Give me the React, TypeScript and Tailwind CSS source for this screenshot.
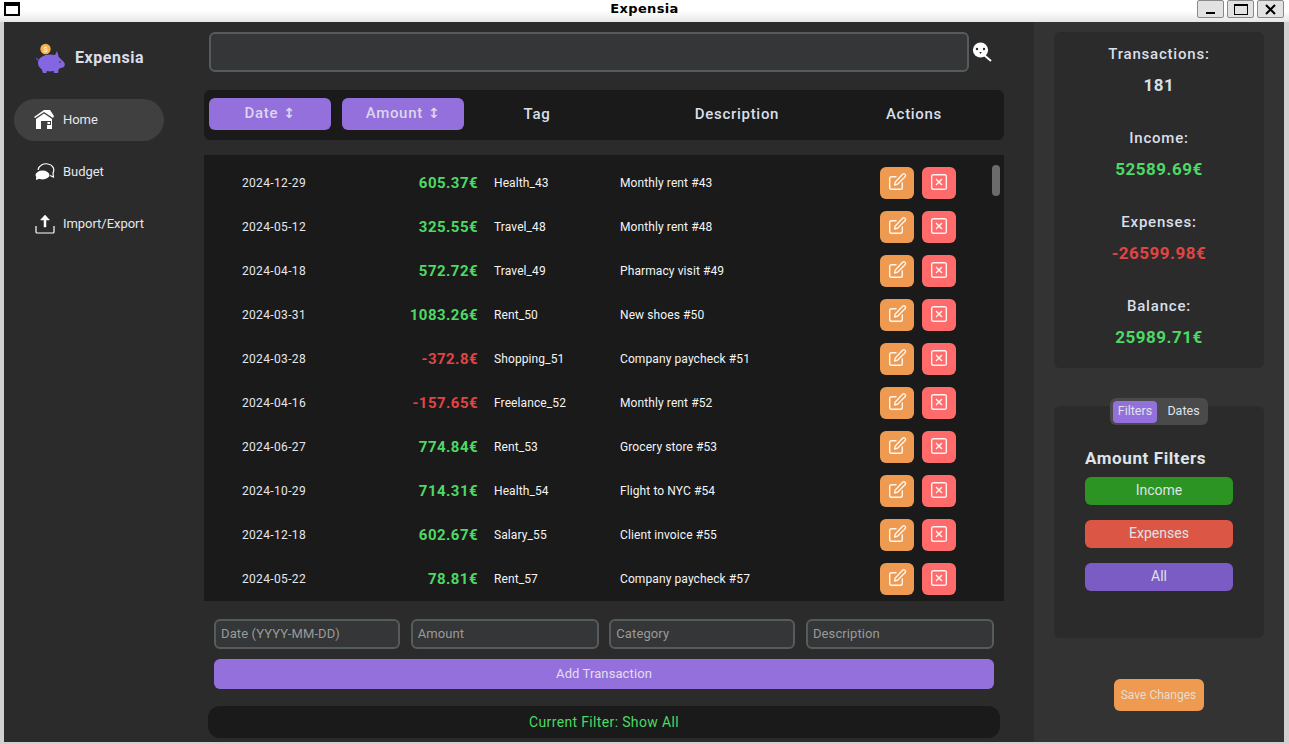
import React from "react";

const rows: [string, string, boolean, string, string][] = [
  ["2024-12-29", "605.37€", true, "Health_43", "Monthly rent #43"],
  ["2024-05-12", "325.55€", true, "Travel_48", "Monthly rent #48"],
  ["2024-04-18", "572.72€", true, "Travel_49", "Pharmacy visit #49"],
  ["2024-03-31", "1083.26€", true, "Rent_50", "New shoes #50"],
  ["2024-03-28", "-372.8€", false, "Shopping_51", "Company paycheck #51"],
  ["2024-04-16", "-157.65€", false, "Freelance_52", "Monthly rent #52"],
  ["2024-06-27", "774.84€", true, "Rent_53", "Grocery store #53"],
  ["2024-10-29", "714.31€", true, "Health_54", "Flight to NYC #54"],
  ["2024-12-18", "602.67€", true, "Salary_55", "Client invoice #55"],
  ["2024-05-22", "78.81€", true, "Rent_57", "Company paycheck #57"],
];

function Piggy() {
  return (
    <svg width="30" height="32" viewBox="0 0 30 32">
      <circle cx="9.5" cy="6" r="5.2" fill="#f6b04c" />
      <text x="9.5" y="9" fontSize="8" fill="#fff" textAnchor="middle" fontFamily="Roboto">$</text>
      <ellipse cx="14" cy="20" rx="12" ry="8.5" fill="#8467e0" />
      <path d="M18 14 L21 8 L23 15 L27 18 L29 21 L28 24 L22 26 Z" fill="#8467e0" />
      <path d="M5 24 h6 l-0.5 6 h-3.5 Z M17 24 h6 l-1 6 h-4 Z" fill="#8467e0" />
      <path d="M0 15 L3 18" stroke="#6a4fc0" strokeWidth="1.2" />
      <circle cx="24" cy="19" r="0.8" fill="#2b2b2b" />
    </svg>
  );
}
function HomeIcon() {
  return (
    <svg width="22" height="20" viewBox="0 0 22 20" fill="#fff">
      <path d="M11 0 h6 l4 6 l-1 2 L11 2 L2 8 L1 7 Z" />
      <path d="M3 9 L11 3.5 L19 9 V19 H14 V11 H8 V19 H3 Z" />
      <rect x="13" y="11" width="5" height="4" fill="#404040" />
      <rect x="14.5" y="12" width="2.5" height="2" fill="#fff" />
    </svg>
  );
}
function ChatIcon() {
  return (
    <svg width="20" height="18" viewBox="0 0 20 18">
      <path d="M3 7 C4 2 9 0 13 1 C18 2 20 6 18 10 L18.5 14 L15 12.5" fill="none" stroke="#fff" strokeWidth="1.2" />
      <ellipse cx="7.5" cy="12" rx="7" ry="4.4" fill="#fff" />
      <path d="M1 14 L1 17 L5 15.5 Z" fill="#fff" />
    </svg>
  );
}
function UploadIcon() {
  return (
    <svg width="20" height="20" viewBox="0 0 20 20" fill="none" stroke="#fff">
      <path d="M10 1 L14.5 6 H11 V13 H9 V6 H5.5 Z" fill="#fff" strokeWidth="0.5" />
      <path d="M1 12 V18 Q1 19 2 19 H18 Q19 19 19 18 V12" strokeWidth="1.2" />
    </svg>
  );
}
function SearchIcon() {
  return (
    <svg width="20" height="20" viewBox="0 0 20 20">
      <path d="M12 13 L19 19" stroke="#fff" strokeWidth="2" />
      <circle cx="8.5" cy="8" r="7.6" fill="#fff" />
      <circle cx="5" cy="7" r="1.2" fill="#2b2b2b" />
      <circle cx="12" cy="7" r="1.2" fill="#2b2b2b" />
      <path d="M7.2 10 h2.6 l-1.3 2 Z" fill="#2b2b2b" />
    </svg>
  );
}
function PenIcon() {
  return (
    <svg width="20" height="20" viewBox="0 0 20 20" fill="none" stroke="#fff" strokeWidth="1.4" strokeLinejoin="round" strokeLinecap="round" opacity="0.92">
      <path d="M9 4.7 H4.5 Q2.7 4.7 2.7 6.5 V15.5 Q2.7 17.3 4.5 17.3 H13.5 Q15.3 17.3 15.3 15.5 V11" />
      <path d="M15.6 2.2 Q16.8 1 18 2.2 Q19.2 3.5 18 4.7 L10.5 12.2 L7.5 13 L8.3 10 Z" />
    </svg>
  );
}
function XIcon() {
  return (
    <svg width="16" height="16" viewBox="0 0 16 16" fill="none" stroke="#fff" strokeWidth="1.4" opacity="0.92">
      <rect x="0.7" y="0.7" width="14.6" height="14.6" rx="1.5" />
      <path d="M5 5 L11 11 M11 5 L5 11" strokeWidth="1.5" />
    </svg>
  );
}
function NavItem({ icon, label, active }: { icon: React.ReactNode; label: string; active?: boolean }) {
  return (
    <div className={`h-[42px] w-[150px] flex items-center rounded-[21px] ${active ? "bg-[#404040]" : ""}`}>
      <div className="w-[49px] flex justify-end pr-[8px] shrink-0">{icon}</div>
      <span className="text-[13px] tracking-[-0.05px] text-[#e5e7eb]">{label}</span>
    </div>
  );
}
function Stat({ label, value, color }: { label: string; value: string; color: string }) {
  return (
    <div className="h-[84px] flex flex-col items-center">
      <div className="h-[32px] flex items-center text-[15px] font-medium tracking-[0.8px] text-[#d9dfe8]">{label}</div>
      <div className={`h-[32px] flex items-center text-[17px] font-bold tracking-[0.5px] ${color}`}>{value}</div>
    </div>
  );
}
function Field({ text, w }: { text: string; w: string }) {
  return (
    <div className={`${w} h-[30px] rounded-[6px] border-2 border-[#565b5e] bg-[#343638] flex items-center pl-[5px] text-[13px] tracking-[0.1px] text-[#9a9a9a]`}>
      {text}
    </div>
  );
}
function SortBtn({ label, className }: { label: string; className: string }) {
  return (
    <div className={`${className} w-[122px] h-[32px] shrink-0 rounded-[6px] bg-[#9370db] flex items-center justify-center pb-[2px] text-[#dcd6ee]`}>
      {label}
      <span className="ml-[5px] text-[14px] font-bold font-['DejaVu_Sans',sans-serif]">↕</span>
    </div>
  );
}

export default function App() {
  return (
    <div className="w-[1289px] h-[744px] bg-[#d0d0d0] flex flex-col overflow-hidden font-['Roboto',sans-serif]">
      {/* Title bar */}
      <div className="h-[22px] shrink-0 bg-gradient-to-b from-white from-50% to-[#e6e6e6] flex items-center relative">
        <div className="absolute left-[4px] top-[2px] w-[16px] h-[14px] border-2 border-black border-t-[4px] bg-white" />
        <div className="flex-1 text-center text-[13px] leading-[16px] -mt-[5px] font-bold tracking-[0.35px] text-black font-['DejaVu_Sans',sans-serif]">Expensia</div>
        <div className="absolute top-0 right-[5px] flex gap-[3px]">
          {[0, 1, 2].map((i) => (
            <div key={i} className="w-[27px] h-[18px] bg-[#e2e2e2] border border-[#8a8a8a] rounded-[2px] flex items-center justify-center">
              {i === 0 && <div className="w-[9px] h-[2px] bg-black mt-[7px]" />}
              {i === 1 && <div className="w-[14px] h-[11px] border border-black border-t-2" />}
              {i === 2 && (
                <svg width="11" height="11" viewBox="0 0 11 11"><path d="M1 1 L10 10 M10 1 L1 10" stroke="#000" strokeWidth="2" /></svg>
              )}
            </div>
          ))}
        </div>
      </div>

      <div className="h-[720px] ml-[4px] mr-[5px] mb-[2px] flex bg-[#2b2b2b]">
        {/* Sidebar */}
        <div className="w-[200px] shrink-0 pl-[10px] flex flex-col">
          <div className="h-[77px] flex items-center pl-[22px] pb-[4px] gap-[9px]">
            <Piggy />
            <span className="text-[16px] font-bold tracking-[0.55px] text-[#d9dfe8] -mt-[1px]">Expensia</span>
          </div>
          <div className="flex flex-col gap-[10px]">
            <NavItem icon={<HomeIcon />} label="Home" active />
            <NavItem icon={<ChatIcon />} label="Budget" />
            <NavItem icon={<UploadIcon />} label="Import/Export" />
          </div>
        </div>

        {/* Main */}
        <div className="w-[830px] shrink-0 pt-[10px] flex flex-col">
          <div className="flex items-center pl-[5px] gap-[3px]">
            <div className="w-[760px] h-[40px] rounded-[6px] border-2 border-[#565b5e] bg-[#343638]" />
            <SearchIcon />
          </div>
          <div className="mt-[18px] w-[800px] h-[50px] rounded-[6px] bg-[#1a1a1a] flex items-center pl-[5px] pb-[2px] text-[#d9dfe8] text-[15px] font-medium tracking-[0.7px]">
            <SortBtn label="Date" className="" />
            <SortBtn label="Amount" className="ml-[11px]" />
            <div className="w-[146px] text-center">Tag</div>
            <div className="w-[254px] text-center">Description</div>
            <div className="w-[100px] text-center">Actions</div>
          </div>
          <div className="mt-[15px] w-[800px] h-[446px] bg-[#1a1a1a] relative overflow-hidden pt-[6px]">
            {rows.map((r) => (
              <div key={r[0] + r[3]} className="h-[44px] flex items-center">
                <div className="w-[102px] shrink-0 text-right text-[12px] tracking-[0.35px] text-[#e5e7eb]">{r[0]}</div>
                <div className={`w-[172px] shrink-0 text-right text-[15px] font-bold tracking-[0.45px] ${r[2] ? "text-[#4cd964]" : "text-[#e04545]"}`}>{r[1]}</div>
                <div className="w-[142px] shrink-0 pl-[16px] text-[12px] tracking-[0.1px] text-[#f3f4f6]">{r[3]}</div>
                <div className="w-[260px] shrink-0 text-[12px] tracking-[0.1px] text-[#f3f4f6]">{r[4]}</div>
                <div className="w-[34px] h-[32px] shrink-0 rounded-[6px] bg-[#ee9a50] flex items-center justify-center pb-[2px]">
                  <PenIcon />
                </div>
                <div className="ml-[8px] w-[34px] h-[32px] shrink-0 rounded-[6px] bg-[#ff6b6b] flex items-center justify-center pb-[2px]">
                  <XIcon />
                </div>
              </div>
            ))}
            <div className="absolute top-[10px] left-[788px] w-[8px] h-[31px] rounded-[4px] bg-[#6b6b6b]" />
          </div>
          <div className="mt-[18px] ml-[10px] w-[780px] flex justify-between">
            <Field text="Date (YYYY-MM-DD)" w="w-[186px]" />
            <Field text="Amount" w="w-[188px]" />
            <Field text="Category" w="w-[186px]" />
            <Field text="Description" w="w-[188px]" />
          </div>
          <div className="mt-[10px] ml-[10px] w-[780px] h-[30px] rounded-[6px] bg-[#9370db] flex items-center justify-center text-[13px] tracking-[0.1px] text-[#e3def0]">Add Transaction</div>
          <div className="mt-[17px] ml-[4px] w-[792px] h-[32px] rounded-[12px] bg-[#1a1a1a] flex items-center justify-center text-[14px] tracking-[0.35px] text-[#4cd964]">Current Filter: Show All</div>
        </div>

        {/* Right */}
        <div className="flex-1 bg-[#333333] pt-[10px] flex flex-col items-center">
          <div className="w-[210px] h-[336px] rounded-[6px] bg-[#2b2b2b] pt-[6px]">
            <Stat label="Transactions:" value="181" color="text-[#d9dfe8]" />
            <Stat label="Income:" value="52589.69€" color="text-[#4cd964]" />
            <Stat label="Expenses:" value="-26599.98€" color="text-[#e04545]" />
            <Stat label="Balance:" value="25989.71€" color="text-[#4cd964]" />
          </div>
          <div className="mt-[38px] w-[210px] h-[232px] rounded-[6px] bg-[#2b2b2b] relative pl-[31px] pt-[41px]">
            <div className="absolute top-[-8px] left-[56px] w-[98px] h-[27px] rounded-[6px] bg-[#4a4a4a] flex items-center pl-[3px] text-[12.5px] text-[#dfe3ea]">
              <div className="w-[44px] h-[22px] rounded-[4px] bg-[#9370db] flex items-center justify-center">Filters</div>
              <div className="w-[50px] text-center pl-[3px]">Dates</div>
            </div>
            <div className="h-[24px] flex items-center text-[17px] font-bold tracking-[0.6px] text-[#dfe3ea]">Amount Filters</div>
            <div className="mt-[6px] w-[148px] h-[28px] rounded-[6px] bg-[#2b9422] flex items-center justify-center pb-[2px] text-[14px] text-[#dfe3ea]">Income</div>
            <div className="mt-[15px] w-[148px] h-[28px] rounded-[6px] bg-[#dc5646] flex items-center justify-center pb-[2px] text-[14px] text-[#dfe3ea]">Expenses</div>
            <div className="mt-[15px] w-[148px] h-[28px] rounded-[6px] bg-[#7a5cc4] flex items-center justify-center pb-[2px] text-[14px] text-[#dfe3ea]">All</div>
          </div>
          <div className="mt-[41px] -ml-[1px] w-[90px] h-[32px] rounded-[6px] bg-[#ee9a50] flex items-center justify-center text-[12px] text-[#e8ddd0]">Save Changes</div>
        </div>
      </div>
    </div>
  );
}
